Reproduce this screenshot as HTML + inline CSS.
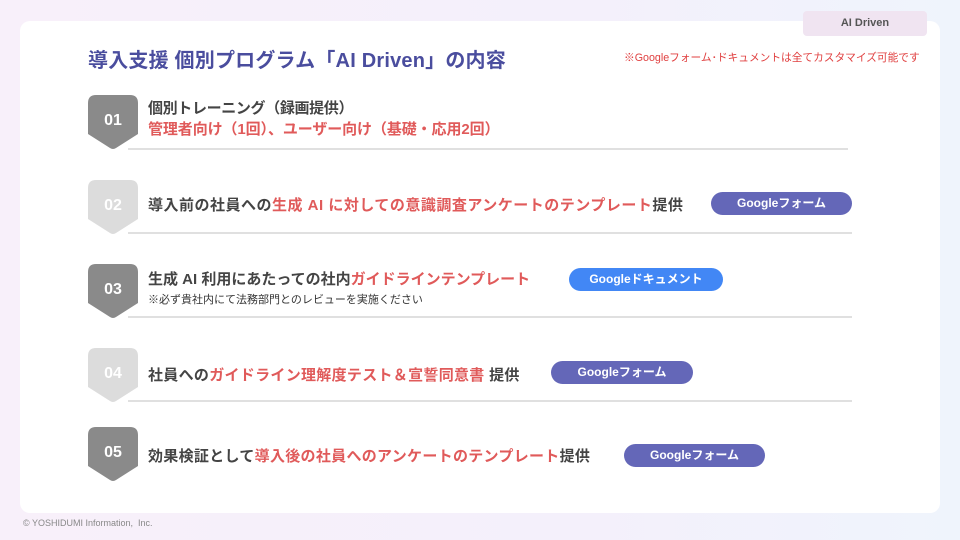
<!DOCTYPE html>
<html><head><meta charset="utf-8"><style>
*{margin:0;padding:0;box-sizing:border-box}
body{width:960px;height:540px;overflow:hidden;position:relative;font-family:"Liberation Sans","Noto Sans CJK JP",sans-serif;background:linear-gradient(90deg,#f8f0fa 0%,#f4f0fb 60%,#eff4fc 100%)}
.card{position:absolute;left:20px;top:21px;width:920px;height:492px;background:#fff;border-radius:10px}
.tab{position:absolute;left:803px;top:11px;width:124px;height:25px;background:#f0e4f1;border-radius:4px;font-size:11px;font-weight:bold;color:#555;text-align:center;line-height:25px}
.title{position:absolute;left:88px;top:44px;font-size:20px;letter-spacing:0.2px;font-weight:bold;color:#4a4d9e;white-space:nowrap}
.note{position:absolute;left:624px;top:50px;font-size:10.7px;color:#e04040;white-space:nowrap}
.b{position:absolute;left:88px;width:50px;height:55px}
.b span{position:absolute;left:0;top:17px;width:50px;text-align:center;color:#fff;font-weight:bold;font-size:16px}
.t{position:absolute;left:148px;font-size:15px;font-weight:bold;color:#444;white-space:nowrap}
.r{color:#e05a5a}
.s{position:absolute;left:148px;font-size:11px;color:#333;white-space:nowrap}
.line{position:absolute;left:128px;height:2px;background:#e0e0e0}
.p{position:absolute;height:23px;border-radius:12px;color:#fff;font-size:12px;font-weight:bold;text-align:center;line-height:23px}
.f{background:#6467b8}.d{background:#4287f5}
.foot{position:absolute;left:23px;top:518px;font-size:9px;color:#888}
</style></head><body>
<div class="card"></div>
<div class="tab">AI Driven</div>
<div class="title">導入支援 個別プログラム「AI Driven」の内容</div>
<div class="note">※Googleフォーム･ドキュメントは全てカスタマイズ可能です</div>

<svg width="0" height="0" style="position:absolute"><defs><path id="sh" d="M8,0 H42 Q50,0 50,8 V39 L28,53 Q25,55 22,53 L0,39 V8 Q0,0 8,0 Z"/></defs></svg>

<div class="b" style="top:95px"><svg width="50" height="55"><use href="#sh" fill="#8a8a8a"/></svg><span>01</span></div>
<div class="t" style="top:97px;letter-spacing:-0.35px">個別トレーニング（録画提供）</div>
<div class="t r" style="top:118px;letter-spacing:-0.1px">管理者向け（1回）、ユーザー向け（基礎・応用2回）</div>
<div class="line" style="top:148px;width:720px"></div>

<div class="b" style="top:180px"><svg width="50" height="55"><use href="#sh" fill="#dcdcdc"/></svg><span>02</span></div>
<div class="t" style="top:194px;letter-spacing:0.5px">導入前の社員への<span class="r">生成 AI に対しての意識調査アンケートのテンプレート</span>提供</div>
<div class="p f" style="left:711px;top:192px;width:141px">Googleフォーム</div>
<div class="line" style="top:232px;width:724px"></div>

<div class="b" style="top:264px"><svg width="50" height="55"><use href="#sh" fill="#8a8a8a"/></svg><span>03</span></div>
<div class="t" style="top:268px">生成 AI 利用にあたっての社内<span class="r">ガイドラインテンプレート</span></div>
<div class="s" style="top:291px">※必ず貴社内にて法務部門とのレビューを実施ください</div>
<div class="p d" style="left:569px;top:268px;width:154px">Googleドキュメント</div>
<div class="line" style="top:316px;width:724px"></div>

<div class="b" style="top:348px"><svg width="50" height="55"><use href="#sh" fill="#dcdcdc"/></svg><span>04</span></div>
<div class="t" style="top:364px;letter-spacing:0.3px">社員への<span class="r">ガイドライン理解度テスト＆宣誓同意書</span> 提供</div>
<div class="p f" style="left:551px;top:361px;width:142px">Googleフォーム</div>
<div class="line" style="top:400px;width:724px"></div>

<div class="b" style="top:427px"><svg width="50" height="55"><use href="#sh" fill="#8a8a8a"/></svg><span>05</span></div>
<div class="t" style="top:445px;letter-spacing:0.3px">効果検証として<span class="r">導入後の社員へのアンケートのテンプレート</span>提供</div>
<div class="p f" style="left:624px;top:444px;width:141px">Googleフォーム</div>

<div class="foot">© YOSHIDUMI Information,&nbsp; Inc.</div>
</body></html>
